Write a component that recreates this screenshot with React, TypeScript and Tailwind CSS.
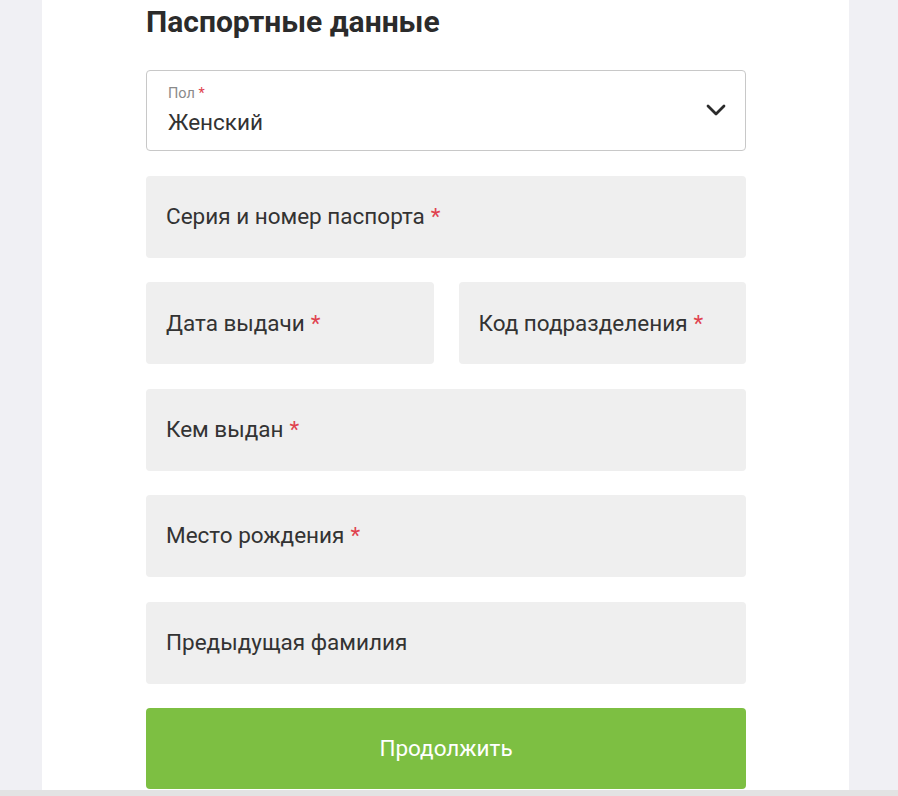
const font = { fontFamily: 'Roboto, "Noto Sans", sans-serif' }

function Field({ label, required = true }: { label: string; required?: boolean }) {
  return <div className="flex h-[82px] items-center rounded-[4px] bg-[#efefef] px-5 text-[22.5px] text-[#333]">
    <span>{label}</span>
    {required && <span className="ml-[6px] text-[#e0424f]">*</span>}
  </div>
}

export default function App() {
  return <div className="flex h-[796px] flex-col overflow-hidden bg-[#f0f0f4]" style={font}>
    <div className="flex flex-1">
      <div className="ml-[42px] w-[807px] bg-white pl-[104px]">
        <div className="flex w-[600px] flex-col">
          <h1 className="mt-[4px] text-[30px] leading-[36px] font-bold text-[#2b2b2b]">Паспортные данные</h1>

          <div className="mt-[30px] flex h-[81px] items-center justify-between rounded-[4px] border border-[#c8c8c8] pl-[21px] pr-[19px]">
            <div className="flex flex-col">
              <span className="text-[14.5px] leading-4 text-[#8a8a8a]">Пол <span className="text-[#e0424f]">*</span></span>
              <span className="mt-[7px] text-[22.5px] leading-[26px] text-[#333]">Женский</span>
            </div>
            <svg width="20" height="12" viewBox="0 0 20 12" fill="none" className="mb-[1px]">
              <path d="M2 2l8 8 8-8" stroke="#2b2b2b" strokeWidth="2.75" strokeLinecap="round" strokeLinejoin="round" />
            </svg>
          </div>

          <div className="mt-[25px] flex flex-col gap-[24.4px]">
            <Field label="Серия и номер паспорта" />
            <div className="grid grid-cols-2 gap-x-[25px]">
              <Field label="Дата выдачи" />
              <Field label="Код подразделения" />
            </div>
            <Field label="Кем выдан" />
            <Field label="Место рождения" />
            <Field label="Предыдущая фамилия" required={false} />
            <button className="h-[81px] rounded-[4px] bg-[#7dbf42] text-[22.5px] text-white">Продолжить</button>
          </div>
        </div>
      </div>
    </div>
    <div className="h-[6px] bg-[#e3e3e3]" />
  </div>
}
